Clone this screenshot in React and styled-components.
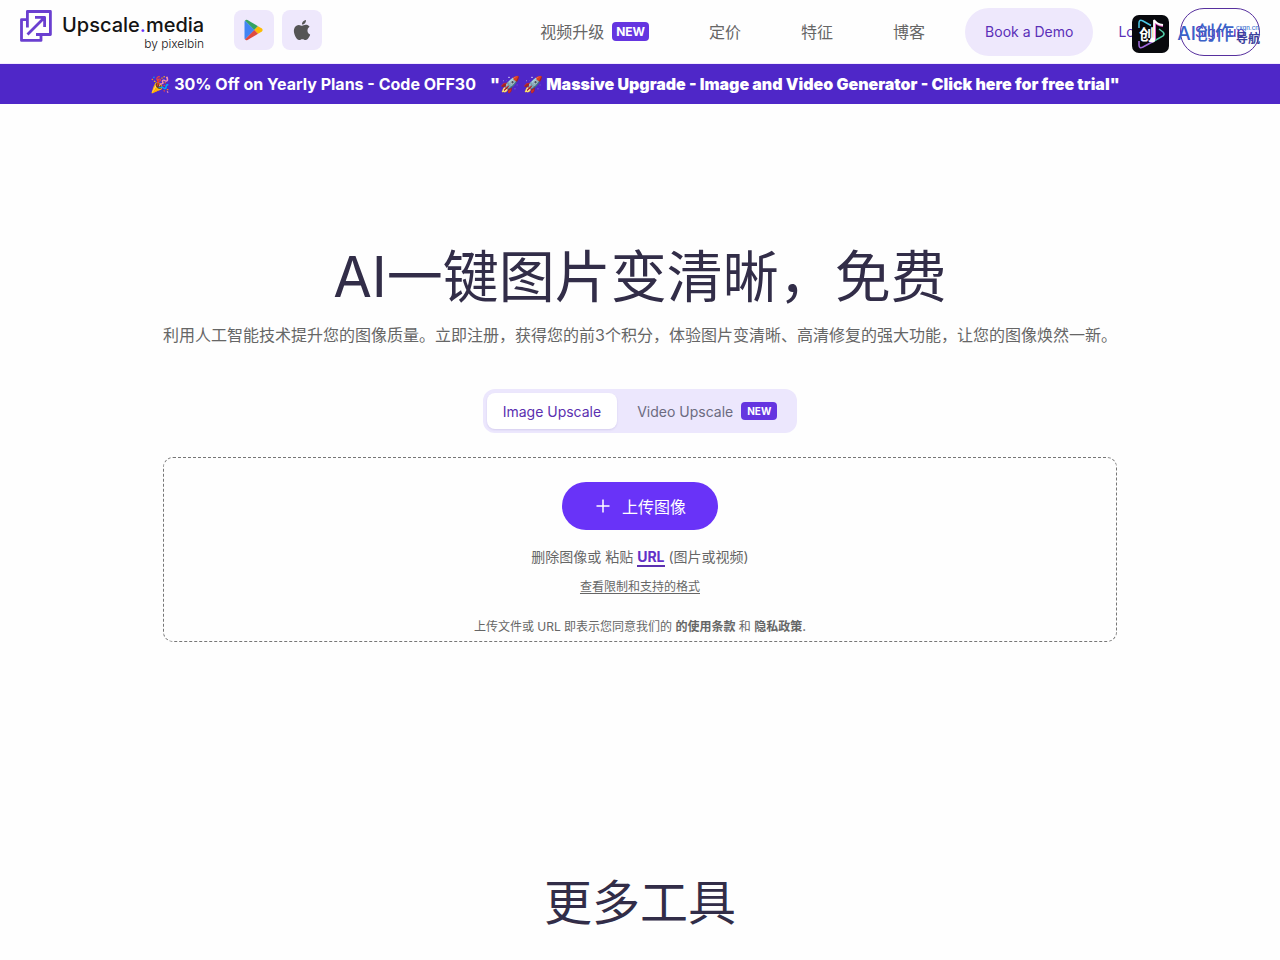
import React, { useState } from "react";
import styled, { createGlobalStyle, css } from "styled-components";

const GlobalStyle = createGlobalStyle`
  * {
    box-sizing: border-box;
  }
  body {
    margin: 0;
    background: #fefefe;
    color: #666;
    font-family: Inter, "Noto Sans CJK SC", sans-serif;
    font-size: 16px;
  }
  a {
    color: inherit;
    text-decoration: none;
  }
  button {
    font-family: inherit;
    border: none;
    cursor: pointer;
  }
`;

const Header = styled.header`
  position: relative;
  display: flex;
  align-items: center;
  height: 64px;
  padding: 0 20px;
  border-bottom: 1px solid #f3eaff;
`;

const BrandGroup = styled.div`
  display: flex;
  gap: 30px;
  margin-bottom: 4px;
`;

const Brand = styled.a`
  display: flex;
  align-items: flex-start;
  gap: 10px;
  color: #141414;
`;

const BrandText = styled.span`
  display: flex;
  flex-direction: column;
  align-items: flex-end;
`;

const BrandName = styled.span`
  font-size: 20px;
  line-height: 30px;
  font-weight: 500;

  em {
    font-style: normal;
    color: #6933f8;
  }
`;

const BrandBy = styled.span`
  font-size: 12px;
  font-weight: 300;
  line-height: 8px;
`;

const Stores = styled.div`
  display: flex;
  gap: 8px;
`;

const StoreLink = styled.a`
  display: flex;
  align-items: center;
  justify-content: center;
  width: 40px;
  height: 40px;
  border-radius: 8px;
  background: #eee8fc;
`;

const Nav = styled.nav`
  display: flex;
  align-items: center;
  gap: 60px;
  margin-left: auto;
  margin-right: 40px;
`;

const NavLink = styled.a`
  display: flex;
  align-items: center;
  gap: 8px;
  line-height: 24px;
`;

const NewTag = styled.span`
  padding: 0 ${(props) => (props.$small ? "6px" : "4px")};
  border-radius: 4px;
  background: #6535e0;
  color: #fff;
  font-weight: 700;
  font-size: ${(props) => (props.$small ? "10px" : "12px")};
  line-height: ${(props) => (props.$small ? "18px" : "19px")};
`;

const Actions = styled.div`
  display: flex;
  align-items: center;
`;

const Pill = styled.button`
  height: 48px;
  padding: 0 ${(props) => (props.$outlined ? "14px" : "20px")};
  border-radius: 24px;
  background: #eee8fc;
  color: #5b2fb8;
  font-size: 14px;
  ${(props) =>
    props.$outlined &&
    css`
      background: transparent;
      border: 1px solid #57309e;
    `}
`;

const LoginLink = styled.a`
  margin: 0 25px;
  color: #5b2fb8;
  font-size: 14px;
`;

/* sits over the login and sign up buttons */
const Watermark = styled.div`
  position: absolute;
  top: 15px;
  right: 20px;
  display: flex;
  align-items: center;
  gap: 8px;
  pointer-events: none;
`;

const WatermarkText = styled.div`
  display: flex;
  align-items: center;
  gap: 2px;
  color: #3b62c8;
`;

const WatermarkName = styled.span`
  font-size: 19px;
  font-weight: 500;
  line-height: 28px;
`;

const WatermarkSide = styled.span`
  display: flex;
  flex-direction: column;
  font-size: 12px;
  font-weight: 700;
  line-height: 13px;
  color: #3a3f9c;

  small {
    font-size: 6px;
    font-weight: 500;
    line-height: 8px;
    color: #3b6fd0;
  }
`;

const Banner = styled.a`
  display: flex;
  justify-content: center;
  gap: 14px;
  padding-right: 10px;
  background: #4f27c8;
  color: #fff;
  font-weight: 700;
  line-height: 40px;

  strong {
    font-weight: 900;
  }
`;

const Hero = styled.main`
  display: flex;
  flex-direction: column;
  align-items: center;
  width: fit-content;
  margin: 137px auto 0;
`;

const Title = styled.h1`
  margin: 0;
  color: #322d48;
  font-size: 56px;
  font-weight: 400;
  line-height: 72px;
`;

const Subtitle = styled.p`
  margin: 10px 0 42px;
  line-height: 24px;
`;

const Tabs = styled.div`
  display: flex;
  gap: 4px;
  padding: 4px;
  border-radius: 12px;
  background: #ece7fd;
`;

const Tab = styled.button`
  display: flex;
  align-items: center;
  gap: 8px;
  height: 36px;
  padding: 0 16px;
  border-radius: 8px;
  background: transparent;
  color: #6b6b80;
  font-size: 14px;
  ${(props) =>
    props.$active &&
    css`
      background: #fff;
      color: #5b30b0;
      box-shadow: 0 1px 2px rgba(60, 30, 140, 0.12);
    `}
`;

const DropZone = styled.section`
  display: flex;
  flex-direction: column;
  align-items: center;
  align-self: stretch;
  margin-top: 24px;
  padding: 24px 0 4px;
  border: 1px dashed #777;
  border-radius: 10px;
`;

const UploadButton = styled.button`
  display: flex;
  align-items: center;
  gap: 12px;
  height: 48px;
  padding: 0 32px;
  border-radius: 24px;
  background: #6933f8;
  color: #fff;
  font-size: 16px;
`;

const DropText = styled.p`
  margin: 15px 0 8px;
  font-size: 14px;
  line-height: 24px;
`;

const UrlLink = styled.a`
  border-bottom: 2px solid #5b30b0;
  color: #6330c8;
  font-weight: 700;
`;

const FormatsLink = styled.a`
  font-size: 12px;
  line-height: 20px;
  text-decoration: underline;
  text-underline-offset: 2px;
`;

const Terms = styled.p`
  margin: 20px 0 0;
  font-size: 12px;
  line-height: 20px;

  a {
    font-weight: 600;
  }
`;

const MoreTools = styled.h2`
  margin: 229px 0 24px;
  color: #322d48;
  font-size: 48px;
  font-weight: 400;
  line-height: 64px;
  text-align: center;
`;

const LogoIcon = () => (
  <svg width="32" height="32" viewBox="0 0 32 32" fill="none" stroke="#6a3fd0" strokeWidth="2.8" strokeLinejoin="round">
    <path d="M7.400 17.500V1.500h23v23H16" />
    <path d="M7.400 9.600H1.500v20.800h19.500V24.500" />
    <path d="M7.500 24.500 24 8M15 7.400h9.600V17" />
  </svg>
);

const PlayIcon = () => (
  <svg width="20" height="22" viewBox="0 0 20 22">
    <path d="M1 1.5 10.5 11 1 20.5Q.5 20 .5 19V3Q.5 2 1 1.5Z" fill="#4285f4" />
    <path d="M1 1.5Q2 .3 3.5 1L14 7.2 10.3 11Z" fill="#34a261" />
    <path d="M14 7.2 18 9.6Q19.5 11 18 12.4L14 14.8 10.3 11Z" fill="#fbbc04" />
    <path d="M1 20.5Q2 21.7 3.5 21L14 14.8 10.3 11Z" fill="#e04a3f" />
  </svg>
);

const AppleIcon = () => (
  <svg width="20" height="20" viewBox="0 0 24 24" fill="#555">
    <path d="M12.152 6.896c-.948 0-2.415-1.078-3.96-1.04-2.04.027-3.91 1.183-4.961 3.014-2.117 3.675-.546 9.103 1.519 12.09 1.013 1.454 2.208 3.09 3.792 3.039 1.52-.065 2.09-.987 3.935-.987 1.831 0 2.35.987 3.96.948 1.637-.026 2.676-1.48 3.676-2.948 1.156-1.688 1.636-3.325 1.662-3.415-.039-.013-3.182-1.221-3.22-4.857-.026-3.04 2.48-4.494 2.597-4.559-1.429-2.09-3.623-2.324-4.39-2.376-2-.156-3.675 1.09-4.61 1.09zM15.53 3.83c.843-1.012 1.4-2.427 1.245-3.83-1.207.052-2.662.805-3.532 1.818-.78.896-1.454 2.338-1.273 3.714 1.338.104 2.715-.688 3.559-1.701" />
  </svg>
);

const PlusIcon = () => (
  <svg width="16" height="16" viewBox="0 0 16 16" stroke="#fff" strokeWidth="1.5">
    <path d="M9 1.500v13M2.500 8h13" />
  </svg>
);

const WatermarkIcon = () => (
  <svg width="38" height="38" viewBox="0 0 38 38" fill="none">
    <rect x="1" width="37" height="38" rx="7" fill="#08090d" />
    <path d="M8 13V8q0-4 4-2l8 4.500" stroke="#4cc9e8" strokeWidth="1.5" />
    <path d="M8 26v4q0 4 4 2l11-6" stroke="#a26be0" strokeWidth="1.5" />
    <path d="M28 14l4 3q2 2 0 4l-9 5" stroke="#52cfa9" strokeWidth="1.5" />
    <path d="M24 25V6q1 4 8 5" stroke="#e05ac0" strokeWidth="2" />
    <path d="M23 25V5q2 4 9 5" stroke="#fff" strokeWidth="1.8" />
    <circle cx="21.500" cy="25" r="2.500" fill="#fff" />
    <text x="8" y="25" fill="#fff" fontSize="15" fontWeight="700">创</text>
  </svg>
);

export default function App() {
  const [tab, setTab] = useState("image");

  return (
    <>
      <GlobalStyle />
      <Header>
        <BrandGroup>
          <Brand href="#">
            <LogoIcon />
            <BrandText>
              <BrandName>
                Upscale<em>.</em>media
              </BrandName>
              <BrandBy>by pixelbin</BrandBy>
            </BrandText>
          </Brand>
          <Stores>
            <StoreLink href="#" aria-label="Google Play">
              <PlayIcon />
            </StoreLink>
            <StoreLink href="#" aria-label="App Store">
              <AppleIcon />
            </StoreLink>
          </Stores>
        </BrandGroup>
        <Nav>
          <NavLink href="#">
            视频升级 <NewTag>NEW</NewTag>
          </NavLink>
          <NavLink href="#">定价</NavLink>
          <NavLink href="#">特征</NavLink>
          <NavLink href="#">博客</NavLink>
        </Nav>
        <Actions>
          <Pill>Book a Demo</Pill>
          <LoginLink href="#">Login</LoginLink>
          <Pill $outlined>Sign up</Pill>
        </Actions>
        <Watermark>
          <WatermarkIcon />
          <WatermarkText>
            <WatermarkName>AI创作</WatermarkName>
            <WatermarkSide>
              <small>cxgn.cn</small>
              导航
            </WatermarkSide>
          </WatermarkText>
        </Watermark>
      </Header>
      <Banner href="#">
        <span>🎉 30% Off on Yearly Plans - Code OFF30</span>
        <strong>"🚀 🚀 Massive Upgrade - Image and Video Generator - Click here for free trial"</strong>
      </Banner>
      <Hero>
        <Title>AI一键图片变清晰，免费</Title>
        <Subtitle>
          利用人工智能技术提升您的图像质量。立即注册，获得您的前3个积分，体验图片变清晰、高清修复的强大功能，让您的图像焕然一新。
        </Subtitle>
        <Tabs>
          <Tab $active={tab === "image"} onClick={() => setTab("image")}>
            Image Upscale
          </Tab>
          <Tab $active={tab === "video"} onClick={() => setTab("video")}>
            Video Upscale <NewTag $small>NEW</NewTag>
          </Tab>
        </Tabs>
        <DropZone>
          <UploadButton>
            <PlusIcon />
            上传图像
          </UploadButton>
          <DropText>
            删除图像或 粘贴 <UrlLink href="#">URL</UrlLink> (图片或视频)
          </DropText>
          <FormatsLink href="#">查看限制和支持的格式</FormatsLink>
          <Terms>
            上传文件或 URL 即表示您同意我们的 <a href="#">的使用条款</a> 和 <a href="#">隐私政策.</a>
          </Terms>
        </DropZone>
      </Hero>
      <MoreTools>更多工具</MoreTools>
    </>
  );
}
